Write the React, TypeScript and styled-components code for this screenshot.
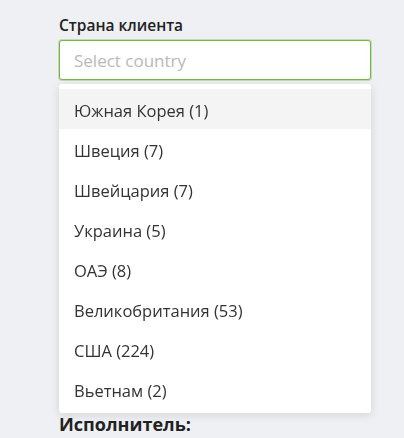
import * as React from "react";
import styled, { createGlobalStyle } from "styled-components";

const countries = [
  "Южная Корея (1)",
  "Швеция (7)",
  "Швейцария (7)",
  "Украина (5)",
  "ОАЭ (8)",
  "Великобритания (53)",
  "США (224)",
  "Вьетнам (2)",
];

function App() {
  const [active] = React.useState(0);

  return (
    <>
      <GlobalStyle />
      <Page>
        <Field>
          <Label>Страна клиента</Label>
          <SelectWrap>
            <Input placeholder="Select country" autoFocus />
            <Menu>
              {countries.map((c, i) => (
                <Option key={c} $active={i === active}>
                  {c}
                </Option>
              ))}
            </Menu>
          </SelectWrap>
        </Field>
        <Section>Исполнитель:</Section>
      </Page>
    </>
  );
}

const GlobalStyle = createGlobalStyle`
  body {
    margin: 0;
    background: #eff0f4;
    font-family: "Open Sans", "Noto Sans", sans-serif;
    color: #2b2b2b;
  }
`;

const Page = styled.div`
  display: flex;
  flex-direction: column;
  gap: 332px;
  padding: 14px 33px 0 59px;
  height: 438px;
  box-sizing: border-box;
  overflow: hidden;
`;

const Field = styled.div`
  display: flex;
  flex-direction: column;
  gap: 4px;
`;

const Label = styled.label`
  font-size: 15.5px;
  font-weight: 600;
  color: #222;
  line-height: 22px;
`;

const SelectWrap = styled.div`
  position: relative;
`;

const Input = styled.input`
  display: block;
  width: 100%;
  height: 40px;
  box-sizing: border-box;
  border: 1px solid #76b546;
  border-radius: 3px;
  box-shadow: 0 0 0 1px rgba(118, 181, 70, 0.35);
  background: #fff;
  padding: 0 14px;
  font-family: inherit;
  font-size: 17px;
  color: #333;
  outline: none;

  &::placeholder {
    color: #b9b9b9;
  }
`;

const Menu = styled.ul`
  position: absolute;
  top: 44px;
  left: 0;
  right: 0;
  margin: 0;
  padding: 5px 0 4px;
  list-style: none;
  background: #fff;
  border-radius: 3px;
  box-shadow: 0 2px 10px rgba(0, 0, 0, 0.12);
`;

const Option = styled.li<{ $active: boolean }>`
  height: 40px;
  display: flex;
  align-items: center;
  padding: 2px 15px 0;
  box-sizing: border-box;
  font-size: 16.5px;
  color: #333;
  background: ${(p) => (p.$active ? "#f4f4f4" : "transparent")};
`;

const Section = styled.h3`
  margin: 0;
  font-size: 18px;
  font-weight: 700;
  color: #222;
`;

export default App;
